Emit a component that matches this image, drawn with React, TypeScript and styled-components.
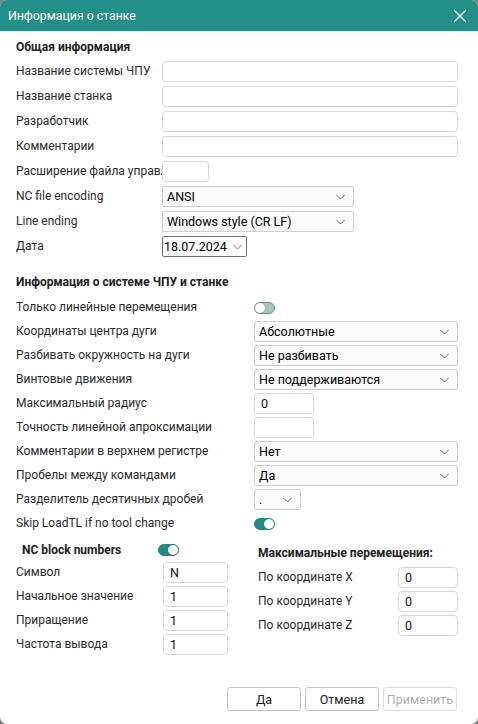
import React from 'react'
import styled, { createGlobalStyle } from 'styled-components'

const GlobalStyle = createGlobalStyle`
  html, body {
    margin: 0;
    padding: 0;
    background: #7d7d7d;
  }
  * {
    box-sizing: border-box;
  }
`

const Dialog = styled.div`
  display: flex;
  flex-direction: column;
  width: 478px;
  height: 724px;
  background: #fff;
  border-radius: 7px;
  overflow: hidden;
  font-family: Roboto, 'Liberation Sans', sans-serif;
  font-size: 12px;
  color: #2b2b2b;
`

const TitleBar = styled.div`
  display: flex;
  align-items: center;
  justify-content: space-between;
  height: 31px;
  padding: 0 8px;
  background: #238f89;
  color: #fff;
  font-size: 12.3px;
`

const CloseButton = styled.div`
  display: flex;
  align-items: center;
  justify-content: center;
  width: 16px;
  height: 16px;
  margin-right: 2px;
`

const Body = styled.div`
  display: flex;
  flex-direction: column;
  padding: 0 20px 0 16px;
`

const SectionTitle = styled.div<{ $top: number; $bottom: number; $indent?: number }>`
  margin-top: ${(p) => p.$top}px;
  margin-bottom: ${(p) => p.$bottom}px;
  padding-left: ${(p) => p.$indent ?? 0}px;
  line-height: 16px;
  font-weight: 700;
  font-size: 12px;
  color: #222;
`

const FieldGrid = styled.div<{ $label: number; $gap: number }>`
  display: grid;
  grid-template-columns: ${(p) => p.$label}px 1fr;
  grid-auto-rows: 21px;
  row-gap: ${(p) => p.$gap}px;
  align-items: center;
`

const Label = styled.div`
  white-space: nowrap;
  overflow: hidden;
  line-height: 21px;
  font-size: 12px;
  color: #2b2b2b;
`

const TextInput = styled.input<{ $w?: number }>`
  width: ${(p) => (p.$w ? `${p.$w}px` : '100%')};
  height: 21px;
  padding: 0 6px;
  border: 1px solid #d6d6d6;
  border-radius: 4px;
  background: #fff;
  font-family: Roboto, 'Liberation Sans', sans-serif;
  font-size: 12.5px;
  color: #111;
  outline: none;
`

const SelectBox = styled.div<{ $w?: number; $dark?: boolean }>`
  display: flex;
  align-items: center;
  justify-content: space-between;
  width: ${(p) => (p.$w ? `${p.$w}px` : '100%')};
  height: 21px;
  padding: 0 ${(p) => (p.$dark ? 4 : 8)}px 0 ${(p) => (p.$dark ? 1 : 4)}px;
  border: 1px solid ${(p) => (p.$dark ? '#6f6f6f' : '#cfcfcf')};
  border-radius: 2px;
  background: ${(p) => (p.$dark ? '#fff' : '#fafafa')};
  color: #000;
  font-size: 12.5px;
  white-space: nowrap;
`

const Toggle = styled.div<{ $on?: boolean }>`
  position: relative;
  width: 21px;
  height: 12px;
  border-radius: 6px;
  background: ${(p) => (p.$on ? '#208a82' : '#a9c3c0')};
  border: 1px solid ${(p) => (p.$on ? '#208a82' : '#6f908c')};

  &::after {
    content: '';
    position: absolute;
    top: 0;
    left: ${(p) => (p.$on ? '9px' : '0')};
    width: 10px;
    height: 10px;
    border-radius: 50%;
    background: #fff;
    box-shadow: 0 0 1px rgba(0, 0, 0, 0.4);
  }
`

const BottomArea = styled.div`
  display: grid;
  grid-template-columns: 220px 1fr;
  column-gap: 22px;
  margin-top: 8px;
`

const NcHeader = styled.div`
  display: grid;
  grid-template-columns: 142px auto;
  align-items: center;
  height: 16px;
  margin-bottom: 4px;
`

const RightColumn = styled.div`
  margin-top: 3px;
`

const Footer = styled.div`
  display: flex;
  justify-content: flex-end;
  gap: 4px;
  margin-top: auto;
  padding: 0 21px 13px 0;
`

const Button = styled.button<{ $disabled?: boolean }>`
  width: 74px;
  height: 24px;
  border: 1px solid ${(p) => (p.$disabled ? '#dcdcdc' : '#c6c6c6')};
  border-radius: 3px;
  background: #fff;
  font-family: Roboto, 'Liberation Sans', sans-serif;
  font-size: 12.5px;
  color: ${(p) => (p.$disabled ? '#b0b0b0' : '#222')};
  padding: 0;
`

const Chevron = () => (
  <svg width="9" height="6" viewBox="0 0 9 6">
    <path d="M0.5 1 L4.5 5 L8.5 1" fill="none" stroke="#777" strokeWidth="1" />
  </svg>
)

const Select: React.FC<{ value: string; w?: number; dark?: boolean }> = ({ value, w, dark }) => (
  <SelectBox $w={w} $dark={dark}>
    <span>{value}</span>
    <Chevron />
  </SelectBox>
)

export default function App() {
  return (
    <>
      <GlobalStyle />
      <Dialog>
        <TitleBar>
          <span>Информация о станке</span>
          <CloseButton>
            <svg width="14" height="14" viewBox="0 0 14 14">
              <path d="M1 1 L13 13 M13 1 L1 13" stroke="#fff" strokeWidth="1.2" />
            </svg>
          </CloseButton>
        </TitleBar>
        <Body>
          <SectionTitle $top={8} $bottom={6}>Общая информация</SectionTitle>
          <FieldGrid $label={146} $gap={4}>
            <Label>Название системы ЧПУ</Label>
            <TextInput readOnly />
            <Label>Название станка</Label>
            <TextInput readOnly />
            <Label>Разработчик</Label>
            <TextInput readOnly />
            <Label>Комментарии</Label>
            <TextInput readOnly />
            <Label>Расширение файла управляющей программы</Label>
            <TextInput readOnly $w={47} />
            <Label>NC file encoding</Label>
            <Select value="ANSI" w={192} />
            <Label>Line ending</Label>
            <Select value="Windows style (CR LF)" w={192} />
            <Label>Дата</Label>
            <Select value="18.07.2024" w={85} dark />
          </FieldGrid>

          <SectionTitle $top={17} $bottom={7}>Информация о системе ЧПУ и станке</SectionTitle>
          <FieldGrid $label={238} $gap={3}>
            <Label>Только линейные перемещения</Label>
            <Toggle />
            <Label>Координаты центра дуги</Label>
            <Select value="Абсолютные" />
            <Label>Разбивать окружность на дуги</Label>
            <Select value="Не разбивать" />
            <Label>Винтовые движения</Label>
            <Select value="Не поддерживаются" />
            <Label>Максимальный радиус</Label>
            <TextInput readOnly $w={60} defaultValue="0" />
            <Label>Точность линейной апроксимации</Label>
            <TextInput readOnly $w={60} />
            <Label>Комментарии в верхнем регистре</Label>
            <Select value="Нет" />
            <Label>Пробелы между командами</Label>
            <Select value="Да" />
            <Label>Разделитель десятичных дробей</Label>
            <Select value="." w={47} />
            <Label>Skip LoadTL if no tool change</Label>
            <Toggle $on />
          </FieldGrid>

          <BottomArea>
            <div>
              <NcHeader>
                <SectionTitle $top={0} $bottom={0} $indent={6}>NC block numbers</SectionTitle>
                <Toggle $on />
              </NcHeader>
              <FieldGrid $label={147} $gap={3}>
                <Label>Символ</Label>
                <TextInput readOnly $w={65} defaultValue="N" />
                <Label>Начальное значение</Label>
                <TextInput readOnly $w={65} defaultValue="1" />
                <Label>Приращение</Label>
                <TextInput readOnly $w={65} defaultValue="1" />
                <Label>Частота вывода</Label>
                <TextInput readOnly $w={65} defaultValue="1" />
              </FieldGrid>
            </div>
            <RightColumn>
              <SectionTitle $top={0} $bottom={6}>Максимальные перемещения:</SectionTitle>
              <FieldGrid $label={140} $gap={3}>
                <Label>По координате X</Label>
                <TextInput readOnly $w={60} defaultValue="0" />
                <Label>По координате Y</Label>
                <TextInput readOnly $w={60} defaultValue="0" />
                <Label>По координате Z</Label>
                <TextInput readOnly $w={60} defaultValue="0" />
              </FieldGrid>
            </RightColumn>
          </BottomArea>
        </Body>
        <Footer>
          <Button>Да</Button>
          <Button>Отмена</Button>
          <Button $disabled>Применить</Button>
        </Footer>
      </Dialog>
    </>
  )
}
